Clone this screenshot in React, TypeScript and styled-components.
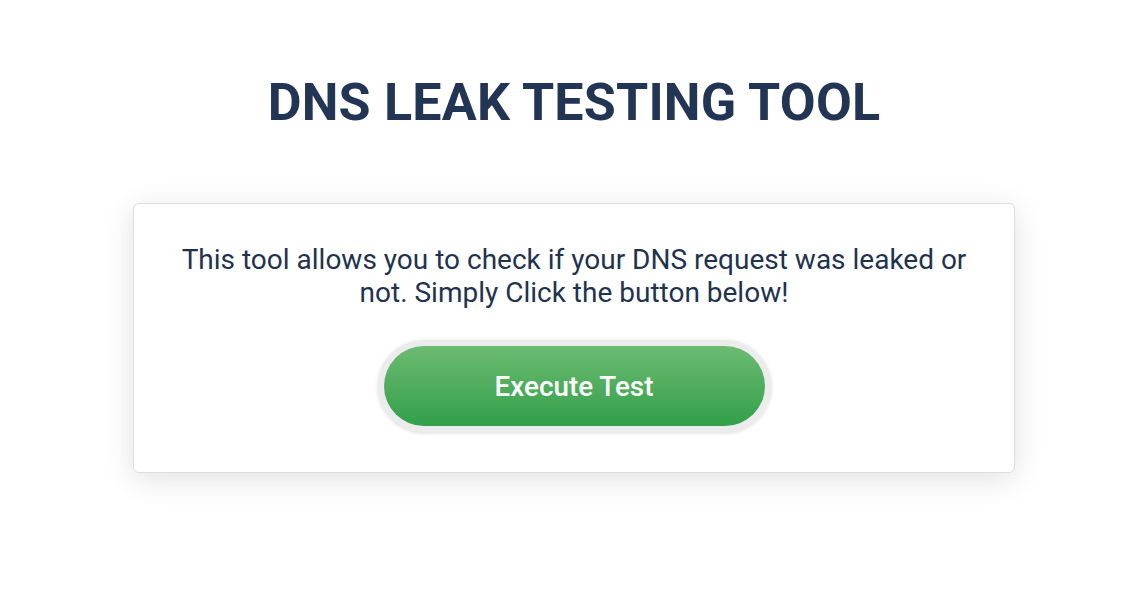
import React from "react";
import styled, { createGlobalStyle } from "styled-components";

const GlobalStyle = createGlobalStyle`
  html, body {
    margin: 0;
    padding: 0;
    background: #ffffff;
  }
  body {
    font-family: Roboto, "Liberation Sans", Arial, sans-serif;
    -webkit-font-smoothing: antialiased;
  }
`;

const Page = styled.div`
  width: 100%;
  min-height: 602px;
  display: flex;
  flex-direction: column;
  align-items: center;
  padding: 67px 0 0 22px;
  box-sizing: border-box;
`;

const Title = styled.h1`
  margin: 0;
  font-size: 52px;
  line-height: 72px;
  font-weight: 700;
  letter-spacing: 0.2px;
  color: #233554;
`;

const Card = styled.section`
  margin-top: 64px;
  width: 882px;
  box-sizing: border-box;
  padding: 39px 40px 40px;
  background: #ffffff;
  border: 1px solid #dedede;
  border-radius: 6px;
  box-shadow: 0 6px 30px rgba(0, 0, 0, 0.12);
  display: flex;
  flex-direction: column;
  align-items: center;
`;

const Intro = styled.p`
  margin: 0;
  max-width: 795px;
  font-size: 28px;
  line-height: 33px;
  font-weight: 400;
  color: #1f3350;
  text-align: center;
`;

const ButtonRing = styled.div`
  margin-top: 31px;
  padding: 6px;
  border-radius: 50px;
  background: #ececec;
  box-shadow: 0 1px 4px rgba(0, 0, 0, 0.15);
`;

const ExecuteButton = styled.button`
  display: block;
  width: 381px;
  height: 80px;
  border: none;
  border-radius: 40px;
  background: linear-gradient(to bottom, #6cbb72 0%, #32a04a 100%);
  color: #ffffff;
  font-family: Roboto, "Liberation Sans", Arial, sans-serif;
  font-size: 27.8px;
  font-weight: 500;
  cursor: pointer;
`;

const App: React.FC = () => {
  return (
    <>
      <GlobalStyle />
      <Page>
        <Title>DNS LEAK TESTING TOOL</Title>
        <Card>
          <Intro>
            This tool allows you to check if your DNS request was leaked or
            not. Simply Click the button below!
          </Intro>
          <ButtonRing>
            <ExecuteButton type="button">Execute Test</ExecuteButton>
          </ButtonRing>
        </Card>
      </Page>
    </>
  );
};

export default App;
